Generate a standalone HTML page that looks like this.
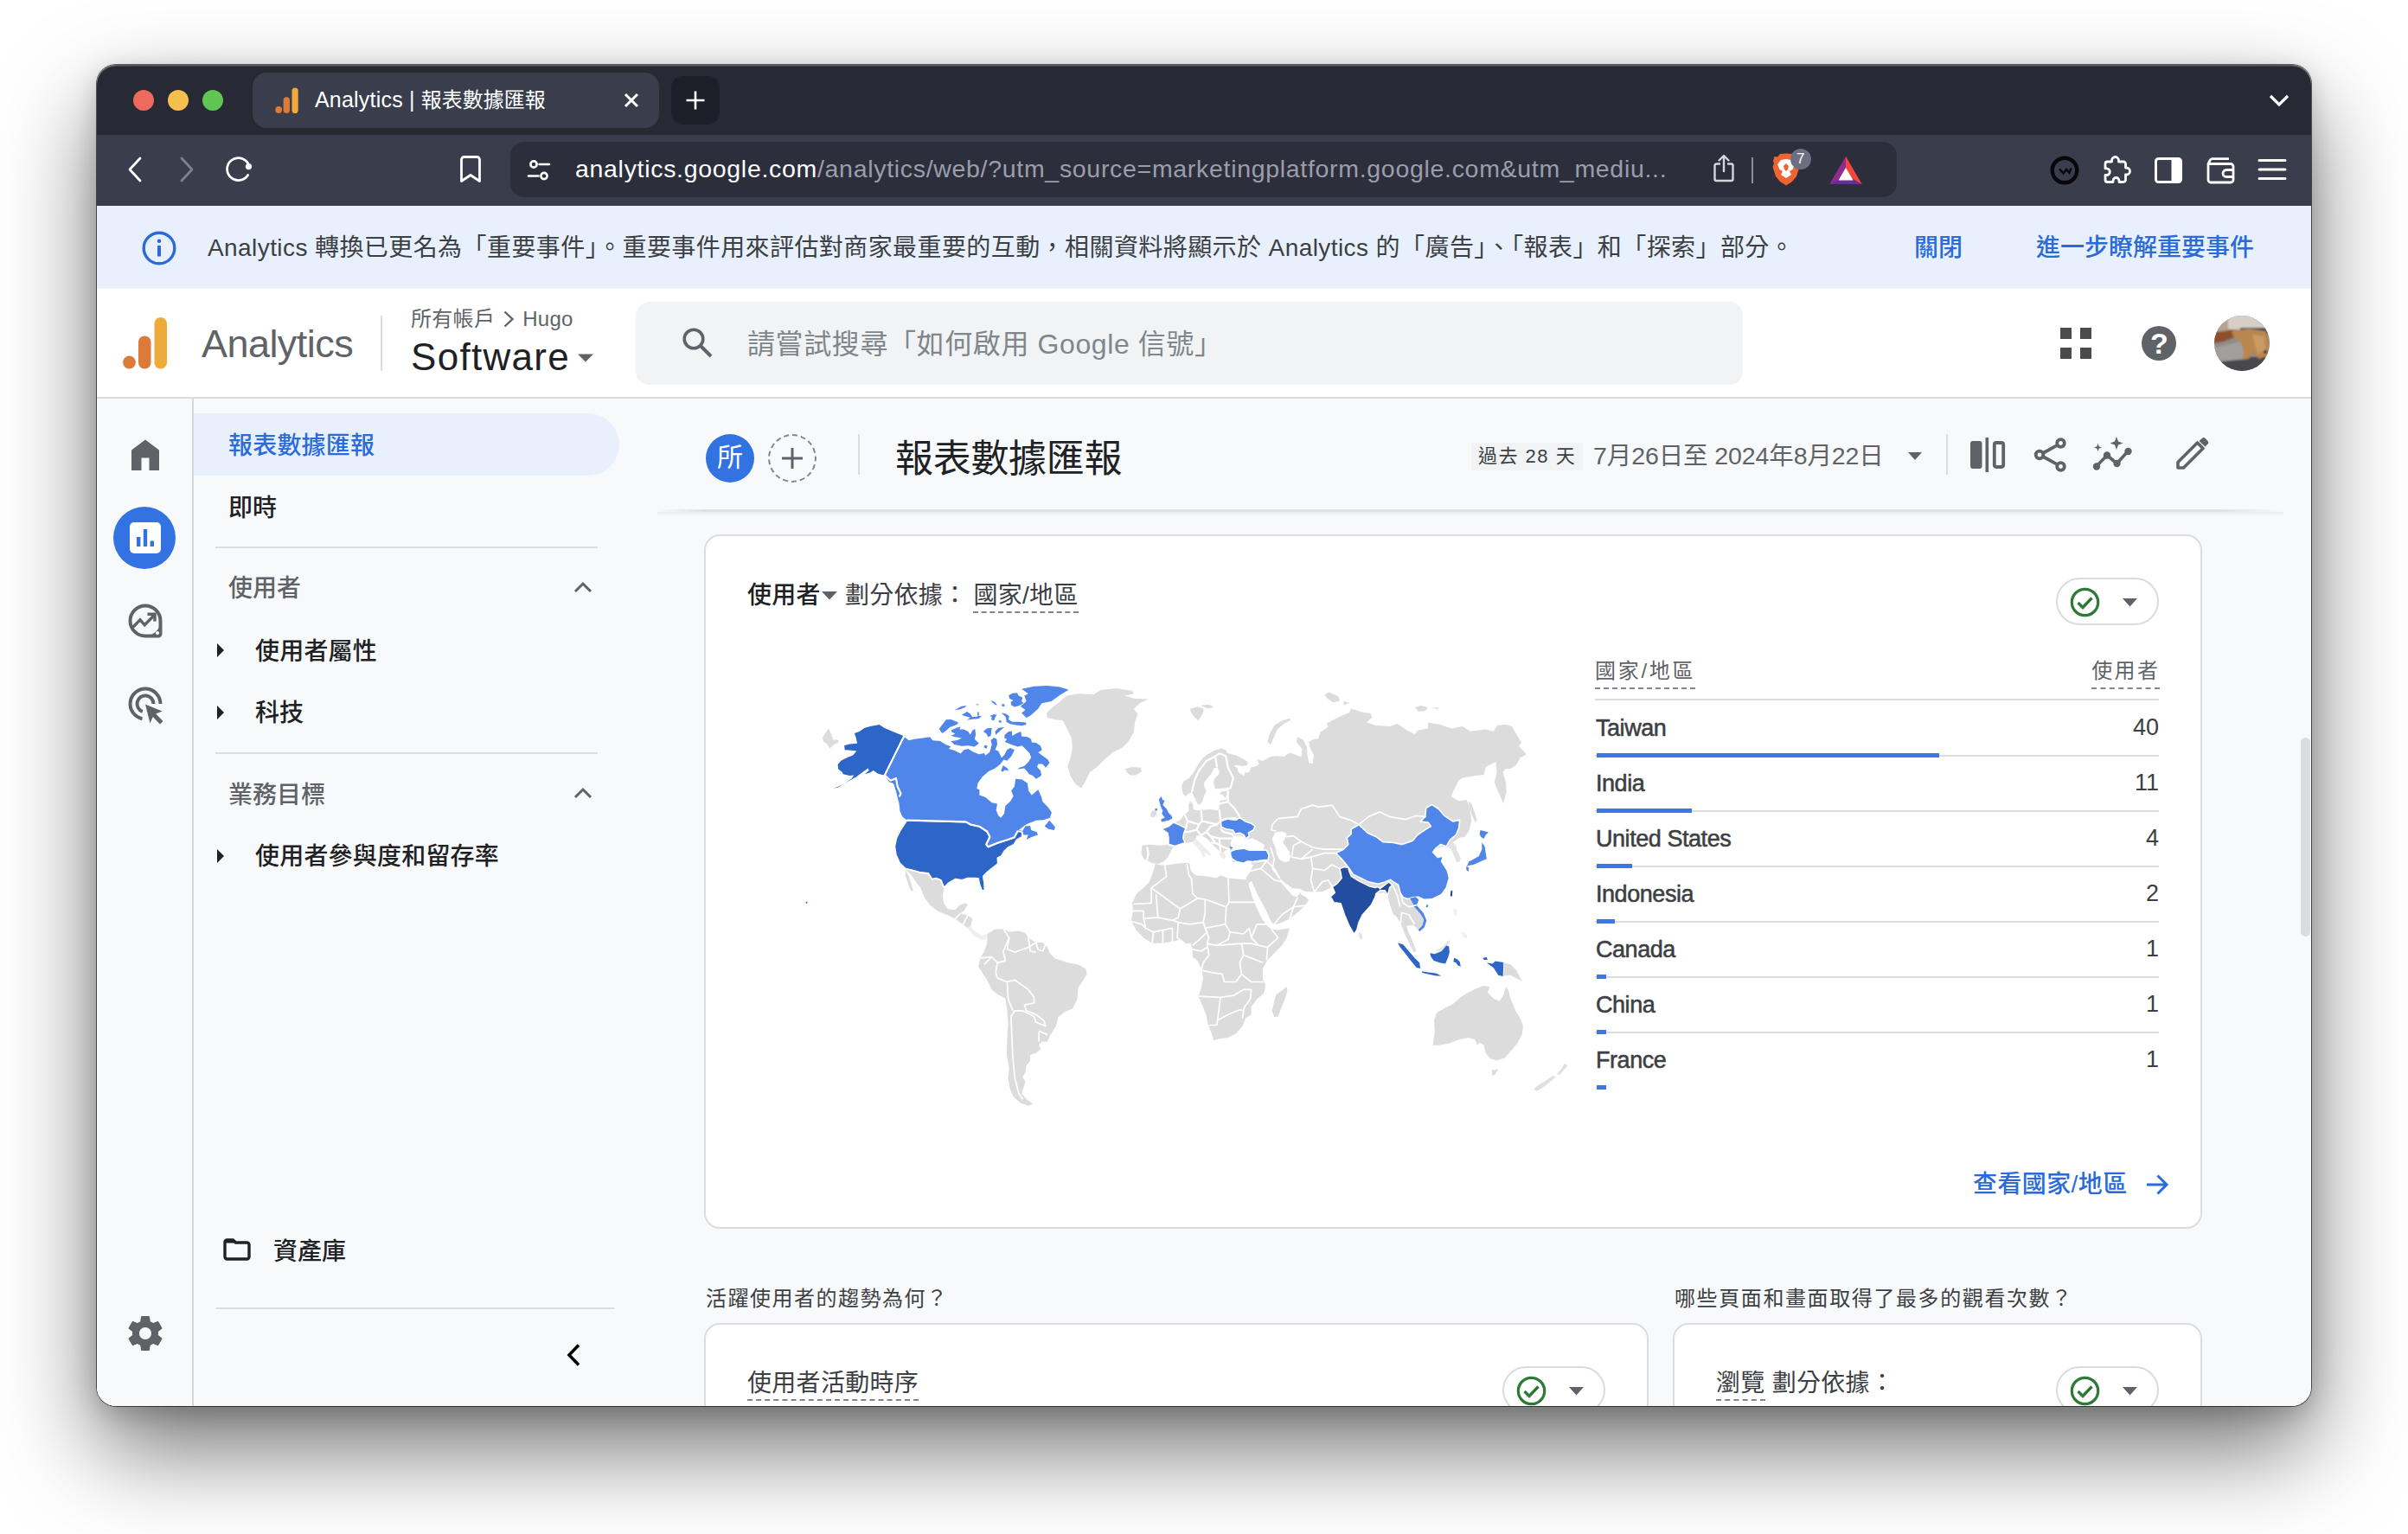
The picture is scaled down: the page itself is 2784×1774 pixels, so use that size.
<!DOCTYPE html>
<html lang="zh-Hant">
<head>
<meta charset="utf-8">
<title>Analytics | 報表數據匯報</title>
<style>
*{box-sizing:border-box;margin:0;padding:0}
html,body{width:2784px;height:1774px;background:#fff;overflow:hidden}
body{position:relative;font-family:"Liberation Sans","Noto Sans CJK TC",sans-serif;color:#202124}
.abs{position:absolute}
.t{position:absolute;white-space:nowrap;line-height:1}
#win{position:absolute;left:112px;top:75px;width:2560px;height:1551px;border-radius:22px;overflow:hidden;background:#f8f9fa}
#shadow{position:absolute;left:112px;top:75px;width:2560px;height:1551px;border-radius:22px;
 box-shadow:0 0 0 1px rgba(0,0,0,.6),0 50px 110px rgba(0,0,0,.55),0 8px 30px rgba(0,0,0,.18)}
/* coordinates inside #win are page coords minus (112,75); we use an inner wrapper shifted back */
#pg{position:absolute;left:-112px;top:-75px;width:2784px;height:1774px}
#tabbar{left:112px;top:75px;width:2560px;height:81px;background:#272935}
#toolbar{left:112px;top:156px;width:2560px;height:82px;background:#3a3d4b}
#banner{left:112px;top:238px;width:2560px;height:96px;background:#e8f0fd}
#hdr{left:112px;top:334px;width:2560px;height:127px;background:#fff;border-bottom:2px solid #dadce0}
#rail{left:112px;top:461px;width:112px;height:1165px;background:#f8f9fa;border-right:2px solid #d5d7da}
.cjk{font-family:"Liberation Sans","Noto Sans CJK TC",sans-serif}
.m{font-weight:500}
.card{position:absolute;background:#fff;border:2px solid #dadce0;border-radius:18px}
.dash{border-bottom:2px dashed #80868b}
.hr{position:absolute;height:2px;background:#dadce0}
.pill{position:absolute;width:119px;height:55px;border:2px solid #dadce0;border-radius:28px;background:#fff}
.row{position:absolute;left:1844px;width:652px;height:64px}
.row .n{position:absolute;left:1px;top:19px;font-size:27px;font-weight:400;-webkit-text-stroke:.55px #3c4043;letter-spacing:-.45px;color:#3c4043;white-space:nowrap;line-height:1}
.row .v{position:absolute;right:0;top:18px;font-size:27px;color:#3c4043;white-space:nowrap;line-height:1}
.row .ln{position:absolute;left:0;right:0;top:63px;height:2px;background:#dadce0}
.row .b{position:absolute;left:2px;top:61px;height:5px;background:#3b78e7}
</style>
</head>
<body>
<div id="shadow"></div>
<div id="win"><div id="pg">

<!-- ===== TAB BAR ===== -->
<div id="tabbar" class="abs"></div>
<div class="abs" style="left:154px;top:104px;width:24px;height:24px;border-radius:50%;background:#ed6a5e"></div>
<div class="abs" style="left:194px;top:104px;width:24px;height:24px;border-radius:50%;background:#f5bf4f"></div>
<div class="abs" style="left:234px;top:104px;width:24px;height:24px;border-radius:50%;background:#61c554"></div>
<div class="abs" style="left:292px;top:84px;width:470px;height:64px;border-radius:16px;background:#3a3d4b"></div>
<svg class="abs" style="left:318px;top:101px" width="28" height="31" viewBox="0 0 28 31">
 <rect x="19.5" y="0.5" width="7.2" height="29.5" rx="3.6" fill="#eeaa3b"/>
 <rect x="9.6" y="11.2" width="7.4" height="18.8" rx="3.7" fill="#dc7b38"/>
 <circle cx="4.2" cy="26" r="3.9" fill="#dc7b38"/>
</svg>
<div class="t" style="left:364px;top:103px;font-size:25px;color:#fff;letter-spacing:.2px" id="tabtitle">Analytics | <span style="font-size:24px;letter-spacing:0">報表數據匯報</span></div>
<svg class="abs" style="left:720px;top:106px" width="20" height="20" viewBox="0 0 20 20"><path d="M3 3L17 17M17 3L3 17" stroke="#fff" stroke-width="3" stroke-linecap="butt"/></svg>
<div class="abs" style="left:776px;top:88px;width:56px;height:56px;border-radius:14px;background:#1d1f29"></div>
<svg class="abs" style="left:792px;top:104px" width="24" height="24" viewBox="0 0 24 24"><path d="M12 1.5V22.5M1.5 12H22.5" stroke="#fff" stroke-width="2.6"/></svg>
<svg class="abs" style="left:2622px;top:108px" width="26" height="16" viewBox="0 0 26 16"><path d="M3 3L13 13L23 3" fill="none" stroke="#fff" stroke-width="3.2" stroke-linejoin="miter"/></svg>


<!-- ===== TOOLBAR ===== -->
<div id="toolbar" class="abs"></div>
<svg class="abs" style="left:146px;top:180px" width="20" height="32" viewBox="0 0 20 32"><path d="M16 3L4 16L16 29" fill="none" stroke="#fff" stroke-width="2.8" stroke-linecap="round" stroke-linejoin="round"/></svg>
<svg class="abs" style="left:206px;top:180px" width="20" height="32" viewBox="0 0 20 32"><path d="M4 3L16 16L4 29" fill="none" stroke="#7d8192" stroke-width="2.8" stroke-linecap="round" stroke-linejoin="round"/></svg>
<svg class="abs" style="left:258px;top:178px" width="36" height="36" viewBox="0 0 36 36"><path d="M28.6 24.5A13 13 0 1 1 28.9 11.2" fill="none" stroke="#fff" stroke-width="2.8" stroke-linecap="round"/><circle cx="29.5" cy="14.6" r="3.6" fill="#fff"/></svg>
<svg class="abs" style="left:530px;top:178px" width="28" height="36" viewBox="0 0 28 36"><path d="M3.5 6.5a3 3 0 0 1 3-3h15a3 3 0 0 1 3 3V31.5L14 24.5L3.5 31.5Z" fill="none" stroke="#fff" stroke-width="2.8" stroke-linejoin="round"/></svg>
<div class="abs" style="left:590px;top:164px;width:1603px;height:64px;border-radius:16px;background:#2c2e3b"></div>
<svg class="abs" style="left:608px;top:182px" width="30" height="30" viewBox="0 0 30 30"><g fill="none" stroke="#fff" stroke-width="2.6" stroke-linecap="round"><circle cx="9" cy="8" r="3.6"/><path d="M15.5 8H27"/><circle cx="21" cy="21.5" r="3.6"/><path d="M3 21.5H14.5"/></g></svg>
<div class="t" style="left:665px;top:181px;font-size:28.5px;color:#fff;letter-spacing:.69px" id="url"><span>analytics.google.com</span><span style="color:#9a9eac">/analytics/web/?utm_source=marketingplatform.google.com&amp;utm_mediu...</span></div>
<svg class="abs" style="left:1978px;top:177px" width="30" height="36" viewBox="0 0 30 36"><g fill="none" stroke="#d5d7de" stroke-width="2.4" stroke-linecap="round" stroke-linejoin="round"><path d="M10 12.5H6.5a2 2 0 0 0-2 2V30a2 2 0 0 0 2 2h17a2 2 0 0 0 2-2V14.5a2 2 0 0 0-2-2H20"/><path d="M15 21V3.5M9.5 8.5L15 3L20.5 8.5"/></g></svg>
<div class="abs" style="left:2025px;top:182px;width:2px;height:30px;background:#8d90a0"></div>
<!-- brave lion -->
<svg class="abs" style="left:2048px;top:176px" width="34" height="40" viewBox="0 0 34 40"><path d="M17 1.5L24 2L27 5.5L30.5 5L32 10L31 13L32.5 17L29 28L24 34L17 38.5L10 34L5 28L1.5 17L3 13L2 10L3.5 5L7 5.5L10 2Z" fill="#f0642f"/><path d="M17 8L23 9L27 14L24.5 20L21 22L23 26L17 30L11 26L13 22L9.5 20L7 14L11 9Z" fill="#fff"/><path d="M17 13L20 16L19 20L17 22L15 20L14 16Z" fill="#f0642f"/></svg>
<div class="abs" style="left:2070px;top:172px;width:24px;height:24px;border-radius:50%;background:#6b6f80"></div>
<div class="t" style="left:2077px;top:175px;font-size:17px;color:#fff">7</div>
<!-- BAT triangle -->
<svg class="abs" style="left:2114px;top:180px" width="40" height="34" viewBox="0 0 40 34"><path d="M20 1L38.5 33H1.5Z" fill="#a5306a"/><path d="M20 1L38.5 33H20Z" fill="#f0483a"/><path d="M1.5 33L20 1L20 33Z" fill="#8f2d8f"/><path d="M1.5 33H38.5L20 22Z" fill="#6a2c9c"/><path d="M20 14L28.5 28.5H11.5Z" fill="#fff"/></svg>
<!-- right icons -->
<svg class="abs" style="left:2369px;top:179px" width="36" height="36" viewBox="0 0 36 36"><circle cx="18" cy="18" r="14.3" fill="none" stroke="#08080a" stroke-width="4.4"/><path d="M12 16.500L16.500 21.500L20 17L23.500 21L25.500 15.500" fill="none" stroke="#08080a" stroke-width="2.4"/></svg>
<svg class="abs" style="left:2429px;top:179px" width="36" height="36" viewBox="0 0 36 36"><path d="M12.5 6.5a4 4 0 0 1 8 0V8H26a2.5 2.5 0 0 1 2.500 2.500V15h1a4 4 0 0 1 0 8h-1v6a2.500 2.500 0 0 1-2.500 2.500H21v-1.500a3.500 3.500 0 0 0-7 0V31.500H7.500A2.500 2.500 0 0 1 5 29V23.500h1.500a3.800 3.800 0 0 0 0-7.600H5V10.500A2.500 2.500 0 0 1 7.500 8h5Z" fill="none" stroke="#fff" stroke-width="2.8" stroke-linejoin="round"/></svg>
<svg class="abs" style="left:2490px;top:181px" width="34" height="32" viewBox="0 0 34 32"><rect x="2.5" y="2.500" width="29" height="27" rx="3" fill="none" stroke="#fff" stroke-width="3"/><path d="M20.500 2.500H29a2.500 2.500 0 0 1 2.500 2.500V27a2.500 2.500 0 0 1-2.500 2.500H20.500Z" fill="#fff"/></svg>
<svg class="abs" style="left:2550px;top:180px" width="36" height="34" viewBox="0 0 36 34"><g fill="none" stroke="#fff" stroke-width="2.8" stroke-linejoin="round"><path d="M3 9.500V28a3 3 0 0 0 3 3H29a3 3 0 0 0 3-3V12.500a3 3 0 0 0-3-3H3L5 5.500a3 3 0 0 1 2.700-1.800H27"/><path d="M32 16.500H24a4 4 0 0 0 0 8h8"/></g></svg>
<svg class="abs" style="left:2610px;top:182px" width="34" height="30" viewBox="0 0 34 30"><path d="M2 3.500H32M2 14H32M2 24.500H32" stroke="#fff" stroke-width="3" stroke-linecap="round"/></svg>


<!-- ===== BANNER ===== -->
<div id="banner" class="abs"></div>
<svg class="abs" style="left:163px;top:266px" width="42" height="42" viewBox="0 0 42 42"><circle cx="21" cy="21" r="17.8" fill="none" stroke="#2a6bd9" stroke-width="3.4"/><circle cx="21" cy="12.800" r="2.300" fill="#2a6bd9"/><rect x="19" y="18" width="4" height="12.500" fill="#2a6bd9"/></svg>
<div class="t" style="left:240px;top:273px;font-size:28px;color:#3c4043;letter-spacing:.42px" id="bannertxt">Analytics 轉換已更名為「重要事件」。重要事件用來評估對商家最重要的互動，相關資料將顯示於 Analytics 的「廣告」、「報表」和「探索」部分。</div>
<div class="t m" style="left:2213px;top:273px;font-size:28px;color:#2a6bd9" id="bclose">關閉</div>
<div class="t m" style="left:2354px;top:273px;font-size:28px;color:#2a6bd9" id="bmore">進一步瞭解重要事件</div>


<!-- ===== HEADER ===== -->
<div id="hdr" class="abs"></div>
<svg class="abs" style="left:141px;top:366px" width="54" height="62" viewBox="0 0 54 62">
 <rect x="37.500" y="1" width="14.500" height="59.500" rx="7.200" fill="#eeaa3b"/>
 <rect x="19" y="22.500" width="14.500" height="38" rx="7.200" fill="#dc7b38"/>
 <circle cx="8.500" cy="53" r="7.400" fill="#dc7b38"/>
</svg>
<div class="t" style="left:233px;top:375px;font-size:45px;color:#5f6368;letter-spacing:-.55px" id="galogo">Analytics</div>
<div class="abs" style="left:440px;top:365px;width:2px;height:64px;background:#dadce0"></div>
<div class="t" style="left:475px;top:357px;font-size:24px;color:#5f6368;letter-spacing:.3px" id="crumb">所有帳戶 <svg width="14" height="22" viewBox="0 0 14 22" style="vertical-align:-3px;margin:0 2px"><path d="M2.500 2.500L11.500 11L2.500 19.500" fill="none" stroke="#5f6368" stroke-width="2.400"/></svg> Hugo</div>
<div class="t" style="left:475px;top:391px;font-size:44px;color:#202124;letter-spacing:1.3px" id="prop">Software</div>
<svg class="abs" style="left:667px;top:408px" width="20" height="12" viewBox="0 0 20 12"><path d="M1 1.500H19L10 10.500Z" fill="#5f6368"/></svg>
<div class="abs" style="left:735px;top:349px;width:1280px;height:96px;border-radius:16px;background:#f1f3f4"></div>
<svg class="abs" style="left:786px;top:376px" width="40" height="40" viewBox="0 0 40 40"><circle cx="16" cy="16" r="10.800" fill="none" stroke="#5f6368" stroke-width="3.600"/><path d="M24 24L36 36" stroke="#5f6368" stroke-width="4"/></svg>
<div class="t" style="left:864px;top:381.5px;font-size:32px;color:#80868b;letter-spacing:.6px" id="search">請嘗試搜尋「如何啟用 Google 信號」</div>
<svg class="abs" style="left:2381px;top:378px" width="38" height="38" viewBox="0 0 38 38"><g fill="#4b4b4b"><rect x="1" y="1" width="13" height="13"/><rect x="24" y="1" width="13" height="13"/><rect x="1" y="24" width="13" height="13"/><rect x="24" y="24" width="13" height="13"/></g></svg>
<div class="abs" style="left:2476px;top:377px;width:40px;height:40px;border-radius:50%;background:#5f6368"></div>
<div class="t" style="left:2486px;top:380px;font-size:34px;font-weight:700;color:#fff">?</div>
<svg class="abs" style="left:2560px;top:365px" width="64" height="64" viewBox="0 0 64 64"><defs><clipPath id="avc"><circle cx="32" cy="32" r="32"/></clipPath><filter id="avb" x="-20%" y="-20%" width="140%" height="140%"><feGaussianBlur stdDeviation="1.3"/></filter></defs><g clip-path="url(#avc)"><rect width="64" height="64" fill="#8f8b8b"/><g filter="url(#avb)"><rect x="-4" y="-4" width="72" height="20" fill="#d6cfc5"/><rect x="-4" y="-4" width="20" height="22" fill="#b3a394"/><rect x="30" y="14" width="38" height="8" fill="#3f4755"/><rect x="-4" y="48" width="72" height="20" fill="#4a474c"/><path d="M-4 38L30 30L40 50L-4 54Z" fill="#a29e9d"/><path d="M-2 20L22 16L26 24L10 30L-2 32Z" fill="#8e4f2c"/><path d="M20 18L40 15L60 18L64 30L62 46L52 50L44 42L40 50L33 50L34 40L30 30L22 24Z" fill="#b9864f"/><path d="M44 22L58 24L60 40L50 44Z" fill="#c99a62"/><circle cx="59" cy="42" r="2" fill="#2a1c14"/></g></g></svg>


<!-- ===== LEFT RAIL + NAV ===== -->
<div id="rail" class="abs"></div>
<!-- rail icons -->
<svg class="abs" style="left:151px;top:507px" width="34" height="38" viewBox="0 0 34 38"><path d="M17 1.500L33 13.500V37H21.500V22.500H12.500V37H1V13.500Z" fill="#5f6368"/></svg>
<div class="abs" style="left:131px;top:586px;width:72px;height:72px;border-radius:50%;background:#3372e1"></div>
<svg class="abs" style="left:150px;top:604px" width="36" height="36" viewBox="0 0 36 36"><rect x="0" y="0" width="36" height="36" rx="5" fill="#fff"/><rect x="8" y="17" width="4.400" height="11" fill="#3372e1"/><rect x="15.800" y="8" width="4.400" height="20" fill="#3372e1"/><rect x="23.600" y="21.500" width="4.400" height="6.500" fill="#3372e1"/></svg>
<svg class="abs" style="left:148px;top:697.500px" width="40" height="40" viewBox="0 0 40 40"><path d="M20 37.500H37.500V20A17.500 17.500 0 0 1 20 37.500Z" fill="#5f6368"/><path d="M37.500 20A17.500 17.500 0 1 0 20 37.500H35a2.500 2.500 0 0 0 2.500-2.500Z" fill="none" stroke="#5f6368" stroke-width="4"/><circle cx="34" cy="34" r="2.100" fill="#fff"/><path d="M5.500 27.500L14 18.800L19.200 24.800L29.500 14.200" fill="none" stroke="#5f6368" stroke-width="3.400"/><path d="M22.500 12.200H31V20.500" fill="none" stroke="#5f6368" stroke-width="3.400"/></svg>
<svg class="abs" style="left:147px;top:792.500px" width="44" height="46" viewBox="0 0 44 46"><g fill="none" stroke="#5f6368" stroke-width="4"><path d="M17.500 38.200A17.500 17.500 0 1 1 38.500 21"/><path d="M17.800 29.900A9.500 9.500 0 1 1 30.500 21"/></g><path d="M21 21.500L40.500 29.500L33.200 32.500L41.500 41L38 44.500L29.700 36L26.500 43.500Z" fill="#5f6368"/></svg>
<svg class="abs" style="left:144px;top:1517.500px" width="48" height="48" viewBox="0 0 24 24"><path fill="#5f6368" d="M19.430 12.980c.040-.320.070-.640.070-.980s-.030-.660-.070-.980l2.110-1.650c.190-.150.240-.420.120-.640l-2-3.460c-.120-.220-.390-.300-.610-.220l-2.490 1c-.520-.400-1.080-.730-1.690-.980l-.380-2.650C14.460 2.180 14.250 2 14 2h-4c-.250 0-.460.180-.490.420l-.380 2.650c-.610.250-1.170.590-1.690.980l-2.490-1c-.230-.090-.490 0-.610.220l-2 3.460c-.130.220-.070.490.120.640l2.110 1.650c-.040.320-.070.650-.070.980s.030.660.070.980l-2.110 1.650c-.190.150-.240.420-.120.640l2 3.460c.120.220.390.300.610.220l2.490-1c.520.400 1.080.730 1.690.980l.380 2.650c.030.240.240.420.490.420h4c.250 0 .460-.180.490-.420l.380-2.650c.610-.250 1.170-.590 1.690-.980l2.490 1c.230.090.490 0 .610-.220l2-3.460c.120-.220.070-.490-.120-.640l-2.110-1.650zM12 15.500c-1.930 0-3.500-1.570-3.500-3.500s1.570-3.500 3.500-3.500 3.500 1.570 3.500 3.500-1.570 3.500-3.500 3.500z"/></svg>
<!-- nav list -->
<div class="abs" style="left:224px;top:478px;width:492px;height:72px;border-radius:0 36px 36px 0;background:#e8f0fd"></div>
<div class="t m" style="left:264px;top:501.5px;font-size:28px;color:#2a6bd9;letter-spacing:.2px">報表數據匯報</div>
<div class="t m" style="left:264px;top:573.5px;font-size:28px;color:#202124">即時</div>
<div class="hr" style="left:249px;top:632px;width:442px"></div>
<div class="t m" style="left:264px;top:666.5px;font-size:28px;color:#5f6368">使用者</div>
<svg class="abs" style="left:663px;top:672px" width="22" height="14" viewBox="0 0 22 14"><path d="M2 12L11 3L20 12" fill="none" stroke="#5f6368" stroke-width="3"/></svg>
<svg class="abs" style="left:251px;top:744px" width="8" height="16" viewBox="0 0 8 16"><path d="M0 0L8 8L0 16Z" fill="#202124"/></svg>
<div class="t m" style="left:295px;top:739.5px;font-size:28px;color:#202124;letter-spacing:.2px">使用者屬性</div>
<svg class="abs" style="left:251px;top:816px" width="8" height="16" viewBox="0 0 8 16"><path d="M0 0L8 8L0 16Z" fill="#202124"/></svg>
<div class="t m" style="left:295px;top:810.5px;font-size:28px;color:#202124">科技</div>
<div class="hr" style="left:249px;top:870px;width:442px"></div>
<div class="t m" style="left:264px;top:905.5px;font-size:28px;color:#5f6368">業務目標</div>
<svg class="abs" style="left:663px;top:910px" width="22" height="14" viewBox="0 0 22 14"><path d="M2 12L11 3L20 12" fill="none" stroke="#5f6368" stroke-width="3"/></svg>
<svg class="abs" style="left:251px;top:982px" width="8" height="16" viewBox="0 0 8 16"><path d="M0 0L8 8L0 16Z" fill="#202124"/></svg>
<div class="t m" style="left:295px;top:976.5px;font-size:28px;color:#202124;letter-spacing:.2px">使用者參與度和留存率</div>
<svg class="abs" style="left:258px;top:1432px" width="32" height="26" viewBox="0 0 32 26"><path d="M2 4.500a2.500 2.500 0 0 1 2.500-2.500H11.500L14.500 5H27.500A2.500 2.500 0 0 1 30 7.500V21.500A2.500 2.500 0 0 1 27.500 24H4.500A2.500 2.500 0 0 1 2 21.500Z" fill="none" stroke="#202124" stroke-width="3.400" stroke-linejoin="round"/><path d="M2 2H12L14.500 5.500H2Z" fill="#202124"/></svg>
<div class="t m" style="left:316px;top:1433.5px;font-size:28px;color:#202124">資產庫</div>
<div class="hr" style="left:250px;top:1512px;width:460px"></div>
<svg class="abs" style="left:654px;top:1553px" width="18" height="28" viewBox="0 0 18 28"><path d="M15 2.500L4 14L15 25.500" fill="none" stroke="#000" stroke-width="3.600"/></svg>


<!-- ===== MAIN ===== -->
<!-- title row -->
<div class="abs" style="left:816px;top:502px;width:56px;height:56px;border-radius:50%;background:#3372e1"></div>
<div class="t" style="left:829px;top:514px;font-size:30px;color:#fff">所</div>
<div class="abs" style="left:888px;top:502px;width:56px;height:56px;border-radius:50%;border:2px dashed #80868b"></div>
<svg class="abs" style="left:903px;top:517px" width="26" height="26" viewBox="0 0 26 26"><path d="M13 1V25M1 13H25" stroke="#5f6368" stroke-width="3"/></svg>
<div class="abs" style="left:992px;top:502px;width:2px;height:47px;background:#dadce0"></div>
<div class="t" style="left:1035px;top:509px;font-size:44px;color:#202124;letter-spacing:-.3px" id="ttl">報表數據匯報</div>
<div class="abs" style="left:1701px;top:512px;width:129px;height:32px;background:#f1f3f4"></div>
<div class="t" style="left:1709px;top:517px;font-size:22px;color:#3c4043;letter-spacing:1.5px" id="chip">過去 28 天</div>
<div class="t" style="left:1842px;top:513px;font-size:28.500px;color:#5f6368;letter-spacing:-.1px" id="daterange">7月26日至 2024年8月22日</div>
<svg class="abs" style="left:2206px;top:523px" width="16" height="10" viewBox="0 0 16 10"><path d="M0 0H16L8 9Z" fill="#5f6368"/></svg>
<div class="abs" style="left:2250px;top:502px;width:2px;height:47px;background:#dadce0"></div>
<!-- compare -->
<svg class="abs" style="left:2277px;top:506px" width="42" height="40" viewBox="0 0 42 40"><rect x="1" y="4" width="13.500" height="32" rx="3" fill="#5f6368"/><rect x="18.500" y="0" width="3.600" height="40" fill="#5f6368"/><rect x="28.800" y="6" width="10.400" height="28" rx="2.200" fill="none" stroke="#5f6368" stroke-width="3.800"/></svg>
<!-- share -->
<svg class="abs" style="left:2351px;top:506px" width="40" height="40" viewBox="0 0 40 40"><g fill="none" stroke="#5f6368" stroke-width="3.800"><circle cx="31.500" cy="6.500" r="4.300"/><circle cx="31.500" cy="33.500" r="4.300"/><circle cx="7" cy="20" r="4.300"/><path d="M27.500 8.800L11 18M11 22L27.500 31.200"/></g></svg>
<!-- insights -->
<svg class="abs" style="left:2418px;top:505px" width="48" height="42" viewBox="0 0 48 42"><g fill="none" stroke="#5f6368" stroke-width="3.600" stroke-linejoin="round"><path d="M6 34L18 21.500L29.500 31L42 17"/></g><circle cx="6" cy="34.500" r="4.200" fill="#5f6368"/><circle cx="18" cy="21.500" r="4.200" fill="#5f6368"/><circle cx="29.500" cy="31" r="4.200" fill="#5f6368"/><circle cx="42.500" cy="17" r="4.200" fill="#5f6368"/><path d="M29 0L31 5.500L36.500 7.500L31 9.500L29 15L27 9.500L21.500 7.500L27 5.500Z" fill="#5f6368"/><path d="M7.500 8L8.700 11.300L12 12.500L8.700 13.700L7.500 17L6.300 13.700L3 12.500L6.300 11.300Z" fill="#5f6368"/></svg>
<!-- pencil -->
<svg class="abs" style="left:2513px;top:505px" width="42" height="42" viewBox="0 0 42 42"><path d="M5 29.500L27.500 7L34 13.500L11.500 36H5Z" fill="none" stroke="#5f6368" stroke-width="3.600" stroke-linejoin="round"/><path d="M29.500 5L33 1.800a2.500 2.500 0 0 1 3.500 0L39.500 5a2.500 2.500 0 0 1 0 3.500L36.500 11.500Z" fill="#5f6368"/></svg>
<!-- sticky header shadow -->
<div class="abs" style="left:760px;top:589px;width:1880px;height:3px;background:linear-gradient(90deg,rgba(0,0,0,0) 0,rgba(0,0,0,.11) 3%,rgba(0,0,0,.11) 96%,rgba(0,0,0,0) 100%);opacity:.9"></div>
<div class="abs" style="left:760px;top:592px;width:1880px;height:5px;background:linear-gradient(180deg,rgba(0,0,0,.06),rgba(0,0,0,0))"></div>

<!-- card 1 -->
<div class="card" style="left:814px;top:618px;width:1732px;height:803px"></div>
<div class="t" style="left:864px;top:675px;font-size:28px;color:#202124;letter-spacing:.3px" id="c1t"><span class="m">使用者</span><svg width="18" height="10" viewBox="0 0 18 10" style="vertical-align:4px;margin:0 9px 0 1px"><path d="M0 0H18L9 9.500Z" fill="#5f6368"/></svg><span style="color:#3c4043">劃分依據：</span><span class="dash" style="margin-left:7px;padding-bottom:3px;color:#3c4043">國家/地區</span></div>
<div class="pill" style="left:2377px;top:668px"></div>
<svg class="abs" style="left:2393px;top:679px" width="35" height="35" viewBox="0 0 35 35"><circle cx="17.500" cy="17.500" r="15.200" fill="none" stroke="#2c7a36" stroke-width="3.200"/><path d="M9.500 18L15 23.500L25.500 12.500" fill="none" stroke="#2c7a36" stroke-width="3.400"/></svg>
<svg class="abs" style="left:2454px;top:692px" width="17" height="10" viewBox="0 0 17 10"><path d="M0 0H17L8.500 9.500Z" fill="#5f6368"/></svg>

<svg class="abs" style="left:0;top:0" width="2784" height="1774" viewBox="0 0 2784 1774"><g stroke-linejoin="round">
<path d="M1209.9 824.4L1215.5 818.9L1224.4 812.2L1233.3 804.4L1246.6 802.2L1264.4 803.3L1273.3 797.8L1291.0 796.0L1308.8 798.9L1311.0 802.2L1299.9 804.4L1311.0 807.8L1327.7 808.4L1317.7 813.3L1311.0 820.0L1315.5 825.5L1312.1 835.5L1311.0 846.6L1304.4 857.8L1297.7 864.4L1286.6 870.0L1277.7 877.8L1268.8 886.6L1259.9 893.3L1253.3 906.6L1249.9 911.5L1243.3 906.6L1237.7 897.7L1234.4 886.6L1237.7 875.5L1239.9 864.4L1238.8 853.3L1233.3 842.2L1228.8 833.3L1219.9 832.2L1211.0 830.0Z" fill="#dcdcdc"/>
<path d="M1301.0 888.9L1308.8 887.1L1318.8 887.8L1319.9 892.2L1313.2 896.6L1306.6 896.6L1302.6 892.9Z" fill="#dcdcdc"/>
<path d="M950.7 853.3L957.8 842.6L961.1 848.9L963.3 855.5L968.9 855.5L969.3 858.9L964.4 861.1L959.5 865.5L955.5 860.0L952.2 857.8Z" fill="#dcdcdc"/>
<path d="M1046.6 1005.5L1055.5 1007.1L1063.3 1009.3L1073.3 1010.6L1077.7 1017.3L1082.2 1015.9L1087.7 1018.2L1091.5 1027.1L1090.0 1035.5L1091.1 1044.4L1095.5 1051.1L1104.4 1052.2L1110.0 1046.6L1116.6 1044.4L1118.8 1046.6L1114.4 1053.3L1110.0 1056.6L1118.8 1058.8L1124.4 1062.2L1122.2 1071.0L1118.8 1073.3L1113.3 1069.3L1104.4 1062.6L1095.5 1058.2L1084.4 1053.7L1075.5 1047.1L1068.9 1038.2L1064.4 1027.1L1057.7 1018.2L1053.3 1011.5Z" fill="#dcdcdc"/>
<path d="M1046.6 1005.5L1050.6 1013.3L1053.7 1022.2L1056.0 1030.2L1053.3 1030.2L1050.0 1022.2L1047.1 1013.3Z" fill="#dcdcdc"/>
<path d="M1122.2 1071.0L1126.6 1076.6L1135.5 1082.2L1141.1 1079.9L1144.4 1077.7L1144.4 1084.4L1135.5 1087.0L1126.6 1082.6L1118.8 1073.3Z" fill="#efefef"/>
<path d="M1331.0 938.9L1335.5 936.6L1337.7 941.1L1334.4 945.5L1329.9 944.4Z" fill="#dcdcdc"/>
<path d="M1375.5 820.0L1384.4 817.3L1391.5 819.5L1390.7 824.9L1385.5 833.3L1381.1 829.3L1377.8 824.9Z" fill="#dcdcdc"/>
<path d="M1387.8 816.0L1397.3 814.7L1403.3 817.3L1397.3 819.5Z" fill="#dcdcdc"/>
<path d="M1465.5 857.8L1467.8 848.9L1473.3 838.9L1482.2 833.3L1491.1 830.7L1492.4 832.4L1484.4 836.9L1476.9 843.5L1472.4 853.3L1468.9 861.3Z" fill="#dcdcdc"/>
<path d="M1531.5 803.3L1536.6 800.4L1547.7 805.5L1548.8 810.7L1541.1 812.2L1534.4 807.8Z" fill="#dcdcdc"/>
<path d="M1553.3 810.7L1560.4 812.9L1553.7 815.5Z" fill="#dcdcdc"/>
<path d="M1635.9 818.2L1642.6 816.0L1651.0 818.2L1647.7 822.2L1639.9 822.7Z" fill="#dcdcdc"/>
<path d="M1655.5 818.2L1663.3 818.2L1662.2 820.2Z" fill="#dcdcdc"/>
<path d="M1697.7 927.1L1701.0 928.9L1704.4 937.7L1707.7 948.8L1705.5 951.1L1701.7 942.2L1698.8 933.3Z" fill="#dcdcdc"/>
<path d="M1320.7 977.7L1330.0 976.8L1342.5 977.7L1350.6 976.5L1351.2 969.6L1348.7 962.7L1343.1 959.0L1351.2 956.5L1358.7 950.9L1364.3 948.4L1368.6 942.8L1372.4 939.7L1374.6 937.2L1373.9 931.0L1376.1 926.6L1379.2 929.7L1379.8 936.2L1384.8 937.2L1389.8 936.6L1399.8 936.0L1407.2 937.2L1409.7 934.7L1409.7 929.7L1411.0 924.8L1416.0 923.5L1414.7 919.8L1409.7 917.9L1412.2 915.4L1419.7 914.8L1422.2 912.3L1419.7 910.4L1414.7 911.7L1404.8 912.3L1402.9 904.8L1404.8 899.8L1409.7 894.9L1409.7 891.1L1407.2 887.4L1403.5 888.6L1401.6 893.0L1397.3 898.6L1392.3 904.8L1392.3 909.8L1394.8 914.8L1392.3 919.8L1391.0 923.5L1389.8 927.9L1385.4 931.0L1382.3 924.8L1379.8 919.8L1378.0 916.0L1374.2 917.9L1369.9 921.0L1367.4 917.3L1366.1 908.6L1368.6 903.6L1374.9 899.8L1379.8 893.6L1384.8 884.9L1389.8 877.4L1396.0 872.4L1404.8 867.4L1412.2 865.6L1417.2 867.4L1418.7 870.9L1422.2 871.8L1429.7 873.7L1437.1 877.4L1442.7 881.1L1442.1 884.9L1437.1 886.1L1429.7 884.9L1426.2 885.6L1430.9 888.6L1431.5 893.0L1438.4 897.3L1439.1 893.6L1444.6 893.0L1445.9 887.4L1452.7 886.1L1455.8 883.6L1453.3 878.0L1459.6 879.9L1462.1 878.7L1469.5 874.9L1474.5 874.3L1484.5 874.9L1487.6 872.4L1492.0 870.6L1504.4 875.5L1505.5 866.6L1498.9 857.8L1500.0 852.2L1506.6 855.5L1511.1 864.4L1511.5 873.3L1513.3 882.2L1517.7 883.3L1518.9 873.3L1514.4 864.4L1513.3 857.8L1517.7 855.5L1524.4 853.8L1526.2 847.1L1535.5 840.4L1533.7 836.7L1544.4 831.1L1553.3 826.7L1560.0 824.0L1562.2 819.5L1573.3 823.3L1584.4 824.9L1586.6 829.3L1580.0 835.5L1591.1 839.1L1606.6 840.0L1615.5 836.9L1626.6 844.4L1635.5 848.9L1639.9 844.4L1651.0 842.2L1651.0 835.5L1664.4 837.8L1677.7 842.6L1691.0 840.0L1699.9 845.8L1717.7 843.5L1726.6 845.8L1731.0 839.1L1739.9 837.8L1747.9 840.0L1753.2 848.9L1759.0 859.1L1755.9 862.6L1764.8 872.4L1757.7 876.0L1753.2 884.4L1746.6 888.9L1739.9 889.3L1737.7 893.3L1741.0 904.4L1741.7 915.5L1738.1 929.3L1732.1 915.5L1727.7 904.4L1730.6 893.3L1729.3 881.1L1717.7 887.1L1715.5 896.0L1704.4 897.3L1691.0 899.5L1686.6 902.6L1679.9 915.5L1677.7 921.3L1686.6 926.2L1695.5 924.9L1699.5 935.5L1701.3 948.8L1698.6 960.4L1693.3 968.0L1687.0 968.8L1680.4 973.7L1673.3 980.0L1666.6 978.8L1659.9 982.2L1656.6 985.5L1662.2 991.1L1668.8 990.0L1666.6 995.5L1673.3 1006.6L1675.5 1015.5L1672.2 1026.6L1666.6 1034.4L1655.5 1039.9L1646.6 1040.4L1639.9 1037.7L1635.5 1038.8L1637.7 1046.6L1645.5 1055.5L1649.3 1064.8L1646.6 1072.2L1641.0 1077.3L1634.2 1069.7L1626.2 1070.8L1627.9 1077.0L1633.1 1088.4L1637.3 1099.5L1634.8 1101.5L1629.3 1090.8L1623.7 1079.5L1619.3 1067.0L1614.2 1059.7L1610.6 1057.3L1606.8 1045.9L1604.4 1035.9L1599.9 1032.2L1593.3 1033.3L1589.9 1036.6L1585.5 1046.6L1575.5 1057.7L1571.1 1066.6L1568.8 1075.5L1565.5 1079.9L1560.0 1071.0L1554.4 1057.7L1550.0 1044.4L1542.2 1043.3L1538.8 1036.6L1543.3 1032.2L1540.0 1025.5L1529.5 1031.1L1519.5 1031.5L1509.5 1031.1L1503.3 1027.9L1494.6 1027.3L1487.1 1022.2L1479.7 1015.9L1479.7 1019.3L1486.0 1025.9L1489.7 1030.4L1494.6 1035.9L1499.7 1037.3L1503.3 1031.7L1504.6 1034.8L1509.5 1037.3L1512.9 1041.1L1508.9 1047.1L1500.0 1055.5L1491.1 1062.6L1480.0 1067.7L1472.6 1069.3L1468.9 1064.4L1465.5 1056.6L1460.4 1046.6L1454.4 1035.5L1450.0 1025.5L1447.1 1018.8L1444.0 1021.1L1440.4 1015.5L1446.2 1007.1L1448.9 1000.0L1446.5 999.5L1447.1 996.4L1435.9 998.3L1424.7 996.4L1422.2 987.7L1421.9 982.1L1417.2 982.7L1414.7 985.8L1411.0 985.2L1407.2 982.1L1403.5 978.3L1399.8 974.6L1394.8 969.6L1388.6 965.9L1383.6 966.5L1382.3 969.6L1379.8 973.3L1373.6 974.6L1369.9 975.2L1363.6 975.8L1358.0 978.9L1354.9 982.1L1352.4 987.0L1349.9 992.0L1345.0 996.4L1338.7 998.9L1332.5 998.3L1327.5 995.8L1322.5 993.3L1319.4 987.0L1320.0 980.8Z" fill="#dcdcdc"/>
<path d="M1382.3 969.6L1388.6 975.8L1394.8 982.1L1399.8 987.0L1399.1 989.5L1394.8 987.0L1392.3 985.8L1393.5 990.8L1391.0 992.0L1388.6 985.8L1383.6 979.6L1378.6 974.6Z" fill="#eeeeee"/>
<path d="M1411.0 985.2L1414.7 985.8L1417.2 989.5L1416.0 993.3L1412.2 992.0L1409.7 988.3Z" fill="#ececec"/>
<path d="M1678.8 974.4L1683.3 976.6L1684.4 983.3L1688.8 992.2L1687.7 996.6L1683.9 997.3L1681.0 990.0L1677.7 982.2L1674.4 980.0Z" fill="#e3e3e3"/>
<path d="M1571.1 1077.8L1574.4 1080.0L1575.5 1085.5L1572.9 1086.2L1570.6 1082.2Z" fill="#e6e6e6"/>
<path d="M1335.5 998.9L1346.6 1001.1L1357.7 998.9L1372.2 997.8L1375.5 998.9L1376.6 1006.7L1382.2 1012.2L1393.3 1013.3L1406.6 1015.5L1411.0 1012.2L1419.9 1015.5L1433.3 1016.7L1443.3 1017.3L1443.9 1024.4L1447.9 1037.8L1453.3 1051.1L1458.8 1062.2L1465.5 1071.1L1469.9 1074.4L1477.7 1075.5L1491.0 1073.3L1487.7 1084.4L1482.1 1093.3L1473.3 1102.2L1465.5 1110.0L1459.9 1120.0L1459.9 1131.1L1463.3 1140.0L1461.0 1148.9L1453.3 1155.5L1446.6 1164.4L1446.6 1173.3L1439.9 1177.7L1436.6 1186.6L1428.8 1195.5L1419.9 1200.0L1411.0 1201.1L1403.3 1203.3L1401.0 1195.5L1396.6 1184.4L1394.4 1173.3L1389.9 1162.2L1385.5 1152.2L1388.8 1142.2L1391.1 1131.1L1388.8 1120.0L1384.4 1111.1L1378.8 1106.6L1378.8 1097.8L1376.6 1091.1L1369.9 1091.1L1364.4 1086.6L1355.5 1088.9L1344.4 1090.6L1332.2 1091.1L1322.2 1084.4L1314.4 1076.6L1307.7 1065.5L1310.0 1053.3L1308.8 1044.4L1314.4 1033.3L1322.2 1026.7L1328.8 1020.0L1332.2 1011.1L1334.4 1004.4Z" fill="#dcdcdc"/>
<path d="M1487.7 1141.1L1488.4 1145.5L1485.5 1155.5L1481.0 1166.6L1477.7 1175.5L1473.3 1176.0L1470.6 1168.8L1473.3 1157.7L1475.5 1150.0L1482.1 1145.5Z" fill="#dcdcdc"/>
<path d="M1142.2 1080.0L1150.0 1074.4L1160.0 1074.4L1166.7 1077.8L1177.8 1076.6L1185.5 1078.9L1188.9 1084.4L1197.8 1090.0L1205.5 1090.0L1211.1 1095.5L1214.4 1103.3L1220.0 1108.4L1233.3 1112.9L1246.6 1115.5L1255.5 1120.4L1256.6 1126.6L1251.1 1135.5L1246.6 1142.2L1245.5 1155.5L1240.0 1166.6L1231.1 1170.0L1223.3 1176.6L1221.1 1186.6L1214.4 1196.6L1211.1 1204.4L1204.4 1204.4L1201.1 1208.8L1203.3 1213.3L1197.8 1217.7L1191.1 1220.0L1191.1 1226.6L1186.6 1232.2L1185.5 1239.9L1182.2 1245.5L1185.5 1251.1L1183.3 1257.7L1181.1 1264.4L1186.6 1271.1L1194.4 1276.6L1188.9 1278.8L1180.0 1275.5L1172.2 1268.8L1167.8 1259.9L1165.5 1246.6L1166.7 1235.5L1164.0 1220.0L1164.4 1202.2L1165.5 1184.4L1164.4 1168.8L1162.2 1154.4L1153.3 1150.0L1146.7 1144.4L1141.1 1133.3L1135.5 1124.4L1131.1 1117.7L1133.3 1107.8L1137.8 1101.1L1141.1 1091.1Z" fill="#dcdcdc"/>
<path d="M1656.6 1208.8L1658.8 1193.3L1658.2 1180.0L1661.1 1171.1L1671.1 1165.5L1679.9 1161.1L1688.8 1153.3L1695.5 1148.9L1706.6 1143.3L1715.5 1140.0L1722.2 1141.1L1719.9 1147.7L1726.6 1154.4L1733.3 1157.7L1737.7 1152.2L1741.0 1141.1L1743.9 1145.5L1746.6 1155.5L1752.1 1168.8L1757.7 1177.7L1761.0 1186.6L1759.5 1196.6L1754.4 1206.6L1746.6 1215.5L1739.9 1223.3L1731.0 1226.6L1723.3 1224.4L1717.7 1217.7L1715.5 1208.8L1711.0 1205.5L1707.7 1208.8L1705.5 1202.2L1697.7 1200.0L1686.6 1202.2L1675.5 1206.6L1664.4 1208.8Z" fill="#dcdcdc"/>
<path d="M1724.8 1237.7L1732.2 1236.6L1728.8 1242.2L1725.5 1244.4Z" fill="#dcdcdc"/>
<path d="M1773.3 1259.5L1777.7 1255.5L1786.6 1249.9L1795.5 1243.9L1798.8 1245.5L1791.0 1252.2L1782.1 1258.8L1776.6 1261.7Z" fill="#e0e0e0"/>
<path d="M1799.9 1242.2L1805.5 1235.5L1808.8 1229.9L1812.8 1232.2L1807.7 1237.7L1803.2 1243.3Z" fill="#e0e0e0"/>
<path d="M1738.6 1112.9L1746.6 1115.5L1753.3 1122.2L1757.7 1131.1L1759.9 1134.4L1754.4 1132.2L1746.6 1127.7L1738.6 1128.4Z" fill="#dcdcdc"/>
<path d="M1658.8 1100.0L1666.6 1095.5L1673.3 1088.9L1676.6 1086.6L1675.5 1092.2L1671.1 1093.3L1666.6 1099.5Z" fill="#e6e6e6"/>
<path d="M1680.4 1051.1L1684.4 1052.2L1683.3 1060.0L1681.1 1057.8Z" fill="#f0f0f0"/>
<path d="M1688.8 1077.8L1695.5 1080.0L1696.6 1085.5L1692.2 1084.4Z" fill="#f0f0f0"/>
<path d="M1425.9 967.1L1429.7 965.9L1437.1 967.1L1439.6 970.6L1448.4 969.6L1455.8 973.3L1462.1 977.1L1460.8 982.7L1449.6 983.9L1440.9 980.8L1433.4 983.3L1427.2 984.6L1423.4 980.8L1422.8 974.6L1424.7 969.6Z" fill="#ffffff"/>
<path d="M1470.8 969.6L1474.5 962.7L1483.2 961.5L1487.6 964.6L1485.7 969.6L1483.2 974.6L1487.0 979.6L1490.7 984.6L1492.0 990.8L1490.7 995.8L1485.7 997.0L1479.5 994.5L1475.8 987.0L1474.5 979.6L1472.0 974.6Z" fill="#ffffff"/>
<path d="M1044.6 851.0L1032.1 846.0L1022.2 841.7L1016.6 837.9L1007.2 839.8L999.7 841.7L993.5 846.0L987.9 847.9L989.8 853.5L991.0 859.7L982.3 860.4L976.1 862.2L976.7 867.2L984.8 867.8L990.4 868.5L986.0 873.4L978.6 876.6L972.3 879.7L968.6 884.0L969.2 889.6L973.6 892.7L974.8 895.2L982.3 897.1L987.3 896.5L984.8 900.2L978.6 904.6L969.8 910.2L963.6 912.1L972.3 908.3L979.8 904.1L989.8 898.4L997.2 893.1L1003.5 888.4L1004.7 890.9L999.7 895.2L1006.0 893.4L1009.7 890.9L1014.7 894.6L1022.2 896.5Z" fill="#2e66c8"/>
<path d="M1022.2 896.5L1025.9 899.6L1029.6 902.7L1032.7 901.5L1035.9 899.6L1037.1 905.8L1038.4 914.6L1041.5 917.7L1039.6 920.8L1037.1 916.4L1035.2 908.3L1032.1 905.2L1028.4 904.6Z" fill="#2e66c8"/>
<path d="M1045.8 852.3L1050.8 856.2L1057.0 854.8L1067.0 853.5L1075.1 852.3L1078.2 856.2L1086.9 857.0L1093.2 861.0L1099.4 863.2L1096.9 866.0L1103.1 867.8L1110.6 871.6L1114.4 867.2L1119.3 866.0L1125.6 869.7L1131.8 872.2L1138.0 870.9L1139.3 873.7L1144.3 869.7L1146.7 861.0L1145.5 856.0L1149.2 852.9L1152.4 854.8L1153.0 861.0L1150.5 867.2L1154.2 868.5L1158.0 876.6L1161.7 872.2L1164.2 867.2L1167.9 865.0L1172.9 867.2L1169.2 874.7L1164.2 879.7L1160.4 878.4L1156.7 883.4L1150.5 888.4L1143.0 892.1L1135.5 898.4L1130.5 905.8L1129.3 912.1L1132.4 913.3L1132.4 919.5L1139.3 922.0L1146.7 928.3L1153.0 929.5L1151.7 937.0L1154.2 943.2L1157.3 945.7L1161.1 940.7L1162.3 932.0L1167.9 927.0L1171.7 920.8L1169.2 914.6L1172.9 909.6L1174.2 900.8L1181.6 901.5L1187.9 905.8L1189.1 914.6L1192.8 919.5L1200.3 913.3L1204.1 922.0L1205.3 927.0L1211.5 933.2L1215.9 939.5L1214.0 945.7L1206.5 948.2L1197.7 948.8L1186.6 953.3L1177.7 960.0L1182.2 961.1L1181.1 966.6L1173.3 967.7L1164.4 971.1L1153.3 974.4L1142.2 978.8L1140.0 975.5L1144.4 967.7L1141.1 961.1L1132.2 955.5L1122.2 953.3L1116.6 950.0L1048.4 948.4L1043.3 944.4L1040.4 937.7L1039.5 928.9L1037.7 922.2L1036.0 915.5L1033.3 906.6L1030.0 902.2L1025.5 898.9L1023.3 896.0Z" fill="#5085ea"/>
<path d="M1085.7 842.9L1093.8 832.3L1099.4 832.1L1108.1 835.4L1106.3 837.9L1098.2 841.0L1093.2 845.4L1089.4 847.9Z" fill="#5085ea"/>
<path d="M1099.4 844.8L1105.6 841.7L1110.6 840.4L1109.4 843.5L1114.4 843.5L1119.3 846.0L1121.8 849.8L1124.3 844.8L1127.4 842.9L1128.1 849.8L1126.8 854.8L1131.8 859.7L1126.8 863.5L1119.3 862.2L1111.9 862.8L1103.1 861.0L1099.4 857.2L1106.9 856.0L1111.9 853.5L1104.4 852.3L1099.4 851.0L1104.4 848.5L1100.6 846.7Z" fill="#5085ea"/>
<path d="M1111.9 826.7L1118.1 823.0L1121.8 825.5L1124.3 829.2L1130.5 828.6L1129.9 823.6L1131.8 823.6L1131.8 828.0L1134.9 828.0L1131.8 831.1L1124.3 831.7L1118.1 832.6L1121.8 829.8L1116.8 828.6Z" fill="#5085ea"/>
<path d="M1103.8 821.1L1111.9 816.8L1117.5 816.1L1115.6 818.0L1109.4 820.5Z" fill="#5085ea"/>
<path d="M1127.4 814.9L1131.8 813.9L1130.5 815.5Z" fill="#5085ea"/>
<path d="M1146.1 809.9L1149.9 811.8L1153.0 815.5L1150.5 814.9L1146.7 811.8Z" fill="#5085ea"/>
<path d="M1158.2 814.3L1161.1 814.3L1161.7 816.8L1158.6 817.1Z" fill="#5085ea"/>
<path d="M1144.3 828.0L1149.2 826.1L1152.4 826.7L1150.5 829.8L1149.2 833.6L1146.1 832.3L1146.7 829.2Z" fill="#5085ea"/>
<path d="M1154.2 833.6L1157.3 832.9L1158.0 835.4L1155.5 835.8Z" fill="#5085ea"/>
<path d="M1157.3 824.2L1162.9 825.5L1166.7 828.0L1166.1 832.3L1170.4 834.8L1177.9 834.8L1186.0 835.4L1186.6 837.9L1181.6 839.2L1174.2 838.6L1167.9 837.3L1163.6 834.8L1162.9 829.8L1160.4 826.7Z" fill="#5085ea"/>
<path d="M1166.1 804.3L1170.4 801.8L1176.0 801.2L1177.3 804.3L1182.3 806.8L1181.0 811.1L1183.5 813.0L1178.5 816.1L1172.9 817.4L1169.2 815.5L1168.5 811.8L1171.7 809.9L1167.3 808.0Z" fill="#5085ea"/>
<path d="M1136.8 846.0L1141.1 842.3L1146.7 841.7L1146.1 846.0L1145.5 851.0L1142.4 852.3L1140.5 848.5Z" fill="#5085ea"/>
<path d="M1150.5 846.0L1154.2 841.7L1161.1 841.0L1156.7 844.8L1153.0 847.9L1151.1 849.8Z" fill="#5085ea"/>
<path d="M1138.6 861.6L1141.8 862.8L1140.5 866.0L1137.4 864.1Z" fill="#5085ea"/>
<path d="M1161.7 849.8L1166.1 846.0L1169.8 845.4L1170.4 851.0L1175.4 847.9L1180.4 846.0L1181.0 851.6L1187.9 852.3L1192.2 854.8L1192.8 858.5L1197.8 859.1L1202.8 862.2L1204.7 867.2L1200.3 870.3L1206.5 874.7L1211.5 878.4L1213.4 882.2L1209.0 887.8L1205.3 883.4L1200.3 883.4L1199.1 887.1L1202.8 890.9L1204.1 895.9L1202.8 897.7L1197.8 900.8L1194.1 897.1L1189.7 895.2L1186.6 890.9L1184.1 888.4L1176.6 889.6L1178.5 887.8L1184.1 885.9L1189.1 880.9L1192.2 875.9L1190.3 870.9L1185.4 866.0L1181.6 862.2L1176.6 863.5L1169.2 861.0L1161.7 857.9L1164.2 854.8L1161.1 853.5Z" fill="#5085ea"/>
<path d="M1157.3 890.9L1159.8 885.3L1164.8 888.4L1166.1 891.5L1161.7 890.3L1159.2 892.7Z" fill="#5085ea"/>
<path d="M1181.1 796.7L1195.5 793.8L1211.0 792.9L1225.5 794.4L1235.5 797.8L1224.4 804.4L1215.5 811.1L1204.4 813.3L1199.9 820.0L1191.1 827.8L1186.6 830.0L1181.1 824.4L1185.5 821.1L1179.9 816.7L1186.6 811.1L1184.4 804.4L1188.8 802.2Z" fill="#5085ea"/>
<path d="M1207.7 955.5L1213.3 948.8L1219.9 956.6L1218.8 960.0L1212.2 958.8Z" fill="#5085ea"/>
<path d="M1182.2 961.1L1185.5 955.5L1191.1 955.1L1192.2 960.0L1198.8 962.2L1199.9 965.5L1193.3 967.7L1186.6 971.1L1188.8 965.5L1183.3 965.5Z" fill="#5085ea"/>
<path d="M1048.4 948.8L1116.6 950.6L1122.2 953.7L1132.2 956.0L1141.1 961.7L1144.4 967.7L1140.4 976.6L1142.6 979.5L1153.3 975.1L1164.4 971.5L1172.8 968.4L1176.6 961.1L1181.7 962.2L1181.7 967.7L1175.5 971.1L1172.2 976.6L1165.5 980.0L1161.1 984.4L1157.7 990.0L1153.3 992.2L1153.7 998.8L1146.6 1004.4L1141.1 1008.8L1136.8 1013.3L1138.0 1021.1L1138.4 1029.3L1135.5 1030.2L1132.6 1023.3L1131.1 1015.9L1126.6 1015.5L1118.8 1015.5L1112.2 1017.7L1104.4 1016.6L1096.6 1021.1L1091.5 1026.6L1087.7 1017.7L1082.2 1015.5L1077.7 1016.6L1073.3 1009.9L1063.3 1008.8L1055.5 1006.6L1046.6 1004.4L1040.0 997.7L1036.0 988.8L1034.4 978.8L1036.6 968.8L1041.1 960.0L1045.5 953.3Z" fill="#2e66c8" stroke="#ffffff" stroke-width="1.6"/>
<path d="M931.8 1042.6L933.3 1042.6L933.3 1044.8L931.8 1044.8Z" fill="#2e66c8"/>
<path d="M1339.9 924.4L1342.6 921.1L1344.4 925.5L1346.6 925.5L1344.4 931.1L1348.8 935.5L1351.0 940.0L1354.4 943.3L1355.5 946.6L1351.0 948.8L1343.2 950.6L1342.1 947.7L1346.6 945.5L1343.2 941.1L1344.4 937.7L1342.1 933.3L1341.0 928.9Z" fill="#5085ea"/>
<path d="M1335.5 935.1L1338.1 935.1L1337.7 937.7L1335.5 937.3Z" fill="#5085ea"/>
<path d="M1343.2 958.8L1351.0 955.5L1356.6 951.1L1362.1 953.3L1371.0 957.7L1368.8 963.3L1367.7 968.8L1369.9 974.4L1364.3 976.6L1357.7 978.8L1351.0 976.6L1351.0 968.8L1349.9 963.3Z" fill="#5085ea" stroke="#ffffff" stroke-width="1.6"/>
<path d="M1411.1 948.8L1416.7 946.6L1428.9 948.4L1433.3 945.5L1440.0 950.0L1446.6 952.2L1451.1 955.5L1448.9 960.0L1443.3 963.3L1444.4 966.6L1440.4 970.0L1437.8 965.5L1433.3 963.3L1427.8 964.4L1425.5 960.0L1417.8 958.8L1412.2 956.6Z" fill="#5085ea" stroke="#ffffff" stroke-width="1.6"/>
<path d="M1422.6 984.4L1428.9 982.2L1437.8 981.1L1444.4 983.3L1455.5 983.3L1464.4 983.3L1467.1 988.8L1466.2 994.4L1457.8 995.1L1450.0 996.6L1442.2 996.0L1437.8 998.2L1430.0 996.6L1424.4 993.3L1422.6 988.8Z" fill="#5085ea" stroke="#ffffff" stroke-width="1.6"/>
<path d="M1421.3 978.8L1425.5 980.0L1423.3 982.2Z" fill="#5085ea"/>
<path d="M1544.4 986.6L1553.3 982.2L1558.8 976.6L1557.3 968.8L1562.2 964.4L1562.2 958.8L1571.1 953.7L1576.6 958.8L1581.1 963.3L1591.1 967.7L1598.8 973.7L1611.1 974.4L1621.1 976.6L1633.3 972.2L1638.8 965.5L1648.8 958.8L1654.4 955.5L1651.0 951.1L1642.2 950.0L1647.7 944.4L1648.8 934.4L1655.5 930.6L1663.3 935.5L1669.9 943.3L1679.9 950.0L1687.7 948.4L1686.6 957.7L1683.3 965.5L1676.6 971.1L1672.2 978.8L1665.5 976.6L1659.9 981.1L1656.6 985.5L1662.2 991.5L1668.8 990.0L1666.6 996.0L1673.3 1006.6L1675.5 1015.5L1672.2 1026.6L1666.6 1034.4L1655.5 1039.9L1646.6 1040.4L1639.9 1037.3L1633.3 1037.7L1627.7 1039.5L1622.2 1037.7L1618.8 1032.2L1616.6 1023.3L1611.1 1019.9L1607.7 1017.3L1601.1 1019.9L1593.3 1022.2L1582.2 1019.9L1573.3 1015.5L1564.4 1011.1L1560.0 1004.4L1556.6 1000.0L1551.1 993.3Z" fill="#5085ea" stroke="#ffffff" stroke-width="1.6"/>
<path d="M1649.3 1046.6L1651.5 1046.2L1650.6 1049.3L1648.4 1048.8Z" fill="#5085ea"/>
<path d="M1548.8 1004.4L1554.4 1002.6L1558.8 1003.3L1560.0 1007.7L1562.2 1013.3L1571.1 1018.8L1582.2 1024.4L1589.9 1026.6L1593.3 1025.5L1595.5 1027.7L1601.1 1023.3L1605.5 1019.9L1609.9 1023.3L1606.6 1026.6L1604.4 1035.5L1601.1 1029.9L1595.5 1029.9L1591.1 1033.3L1589.9 1037.7L1585.5 1046.6L1575.5 1057.7L1571.1 1066.6L1568.8 1075.5L1565.5 1080.4L1560.0 1071.0L1554.4 1057.7L1550.0 1044.8L1542.2 1043.9L1538.2 1036.8L1543.3 1032.4L1540.4 1025.7L1545.5 1022.2L1551.1 1015.5L1550.0 1008.8Z" fill="#234d9e" stroke="#ffffff" stroke-width="1.6"/>
<path d="M1711.5 960.0L1715.5 961.1L1721.0 962.6L1717.7 965.5L1715.5 970.0L1712.1 967.7L1710.6 964.4Z" fill="#5085ea"/>
<path d="M1713.3 974.4L1716.6 978.8L1717.7 986.6L1718.8 993.3L1713.3 995.5L1708.8 997.7L1703.3 1000.0L1697.7 1001.1L1695.5 1003.3L1698.1 996.6L1704.4 993.3L1709.9 990.0L1713.3 982.2Z" fill="#5085ea"/>
<path d="M1695.0 1002.2L1698.1 1003.3L1697.7 1007.7L1695.5 1006.6Z" fill="#5085ea"/>
<path d="M1677.3 1030.2L1679.3 1029.7L1678.8 1036.8L1676.8 1036.2Z" fill="#1f4596"/>
<path d="M1629.9 1038.8L1636.6 1037.3L1640.4 1040.4L1637.7 1047.1L1645.7 1055.9L1649.3 1064.8L1646.6 1072.4L1641.3 1077.3L1639.9 1075.0L1644.8 1069.9L1646.2 1063.3L1642.2 1056.6L1635.0 1048.8L1632.8 1043.3Z" fill="#5085ea"/>
<path d="M1616.0 1090.4L1622.2 1092.2L1628.8 1100.0L1635.5 1107.8L1641.1 1113.3L1642.2 1120.0L1637.7 1118.9L1631.1 1111.1L1624.4 1102.2L1618.8 1095.5Z" fill="#2e66c8"/>
<path d="M1643.9 1123.3L1651.1 1124.4L1659.9 1125.5L1666.6 1128.4L1659.9 1128.4L1651.1 1126.6L1644.4 1124.9Z" fill="#2e66c8"/>
<path d="M1653.3 1102.2L1658.8 1103.3L1666.6 1100.0L1672.2 1093.3L1675.1 1094.4L1675.9 1101.1L1674.4 1106.6L1671.1 1114.4L1664.4 1113.3L1657.7 1111.1L1654.4 1106.6Z" fill="#2e66c8"/>
<path d="M1681.1 1107.8L1684.4 1108.9L1687.7 1112.2L1688.8 1117.7L1685.5 1116.6L1683.3 1113.3L1680.4 1112.2Z" fill="#2e66c8"/>
<path d="M1714.4 1107.8L1718.8 1107.1L1719.9 1110.0L1715.5 1110.0Z" fill="#2e66c8"/>
<path d="M1718.8 1113.3L1725.5 1114.4L1728.8 1111.5L1738.2 1112.9L1737.7 1128.9L1732.2 1127.7L1726.6 1118.9L1722.2 1116.0Z" fill="#2e66c8"/>
<path d="M1045.2 851.3L1022.8 896.5L1025.9 899.4L1029.6 902.7L1035.9 899.9L1037.7 909.6L1041.5 917.7L1039.6 921.4" fill="none" stroke="#fff" stroke-width="2.2"/>
<path d="M1048.4 948.6L1116.6 950.4L1122.2 953.5L1132.2 955.7L1141.1 961.5L1144.4 967.7L1140.2 976.6L1142.4 979.3L1153.3 974.8L1164.4 971.3L1172.8 968.2L1176.6 961.1" fill="none" stroke="#fff" stroke-width="2.2"/>
<path d="M1346.6 1001.1L1348.8 1013.3L1338.8 1021.1L1331.1 1026.7L1331.1 1044.4L1310.0 1045.5" fill="none" stroke="#fff" stroke-width="1.7"/>
<path d="M1372.2 998.9L1374.4 1011.1L1377.7 1016.7L1378.8 1033.3L1384.4 1038.9" fill="none" stroke="#fff" stroke-width="1.7"/>
<path d="M1331.1 1026.7L1364.4 1051.1L1384.4 1038.9L1393.3 1040.0L1417.7 1048.9L1421.0 1043.3" fill="none" stroke="#fff" stroke-width="1.7"/>
<path d="M1336.6 1034.4L1338.8 1061.1L1322.2 1062.2" fill="none" stroke="#fff" stroke-width="1.7"/>
<path d="M1364.4 1051.1L1362.2 1061.1L1355.5 1064.4L1338.8 1061.1" fill="none" stroke="#fff" stroke-width="1.7"/>
<path d="M1419.9 1015.5L1421.0 1043.3L1453.3 1043.3" fill="none" stroke="#fff" stroke-width="1.7"/>
<path d="M1417.7 1048.9L1416.6 1068.9L1393.3 1073.3L1391.1 1066.6L1393.3 1055.5L1393.3 1040.0" fill="none" stroke="#fff" stroke-width="1.7"/>
<path d="M1362.2 1066.6L1375.5 1068.9L1391.1 1066.6L1395.5 1077.8L1386.6 1086.6L1378.8 1093.3" fill="none" stroke="#fff" stroke-width="1.7"/>
<path d="M1362.2 1066.6L1361.1 1084.4L1369.9 1091.1" fill="none" stroke="#fff" stroke-width="1.7"/>
<path d="M1416.6 1068.9L1422.2 1077.8L1437.7 1080.0L1444.4 1073.3L1446.6 1084.4L1453.3 1068.9L1464.4 1068.9" fill="none" stroke="#fff" stroke-width="1.7"/>
<path d="M1446.6 1084.4L1455.5 1093.3L1465.5 1095.5L1477.7 1084.4L1469.9 1074.4" fill="none" stroke="#fff" stroke-width="1.7"/>
<path d="M1465.5 1095.5L1464.4 1110.0" fill="none" stroke="#fff" stroke-width="1.7"/>
<path d="M1395.5 1091.1L1406.6 1093.3L1435.5 1091.1L1437.7 1104.4L1433.3 1113.3L1435.5 1126.6L1428.8 1135.5L1415.5 1135.5L1413.3 1126.6L1399.9 1124.4L1388.8 1122.2" fill="none" stroke="#fff" stroke-width="1.7"/>
<path d="M1437.7 1104.4L1459.9 1113.3" fill="none" stroke="#fff" stroke-width="1.7"/>
<path d="M1435.5 1126.6L1446.6 1135.5L1461.0 1135.5" fill="none" stroke="#fff" stroke-width="1.7"/>
<path d="M1385.5 1152.2L1411.0 1153.3L1426.6 1151.1L1437.7 1144.4L1446.6 1144.4L1445.5 1155.5L1438.8 1164.4L1437.7 1168.8" fill="none" stroke="#fff" stroke-width="1.7"/>
<path d="M1411.0 1153.3L1407.7 1180.0L1419.9 1173.3L1433.3 1167.7L1437.7 1168.8L1436.6 1177.7" fill="none" stroke="#fff" stroke-width="1.7"/>
<path d="M1407.7 1180.0L1406.6 1185.5L1397.7 1185.5" fill="none" stroke="#fff" stroke-width="1.7"/>
<path d="M1322.2 1062.2L1324.4 1073.3L1333.3 1077.8L1332.2 1091.1" fill="none" stroke="#fff" stroke-width="1.7"/>
<path d="M1333.3 1077.8L1344.4 1075.5L1344.4 1090.6" fill="none" stroke="#fff" stroke-width="1.7"/>
<path d="M1344.4 1075.5L1355.5 1073.3L1355.5 1088.9" fill="none" stroke="#fff" stroke-width="1.7"/>
<path d="M1355.5 1064.4L1362.2 1066.6" fill="none" stroke="#fff" stroke-width="1.7"/>
<path d="M1310.0 1053.3L1322.2 1053.3L1322.2 1062.2" fill="none" stroke="#fff" stroke-width="1.7"/>
<path d="M1307.7 1065.5L1320.0 1068.9L1324.4 1073.3" fill="none" stroke="#fff" stroke-width="1.7"/>
<path d="M1393.3 1073.3L1397.7 1084.4L1395.5 1091.1" fill="none" stroke="#fff" stroke-width="1.7"/>
<path d="M1422.2 1077.8L1419.9 1086.6L1406.6 1093.3" fill="none" stroke="#fff" stroke-width="1.7"/>
<path d="M1435.5 1091.1L1446.6 1091.1L1455.5 1093.3" fill="none" stroke="#fff" stroke-width="1.7"/>
<path d="M1388.8 1122.2L1391.1 1113.3L1397.7 1104.4L1395.5 1091.1" fill="none" stroke="#fff" stroke-width="1.7"/>
<path d="M1378.8 1097.8L1388.8 1100.0L1395.5 1095.5" fill="none" stroke="#fff" stroke-width="1.7"/>
<path d="M1160.0 1074.4L1166.7 1084.4L1164.4 1097.8L1173.3 1101.1L1188.9 1095.5L1197.8 1090.0" fill="none" stroke="#fff" stroke-width="1.7"/>
<path d="M1166.7 1084.4L1160.0 1100.0L1162.2 1111.1L1153.3 1113.3L1151.1 1124.4L1153.3 1131.1L1164.4 1135.5" fill="none" stroke="#fff" stroke-width="1.7"/>
<path d="M1133.3 1107.8L1146.7 1106.6L1153.3 1113.3" fill="none" stroke="#fff" stroke-width="1.7"/>
<path d="M1146.7 1106.6L1137.8 1115.5" fill="none" stroke="#fff" stroke-width="1.7"/>
<path d="M1164.4 1135.5L1173.3 1133.3L1188.9 1144.4L1195.5 1153.3L1195.5 1160.0L1184.4 1162.2L1186.6 1168.8L1197.8 1173.3L1206.6 1180.0L1208.9 1186.6L1197.8 1182.2L1195.5 1175.5L1182.2 1168.8L1173.3 1168.8L1168.9 1175.5" fill="none" stroke="#fff" stroke-width="1.7"/>
<path d="M1164.4 1135.5L1165.5 1155.5L1171.1 1168.8" fill="none" stroke="#fff" stroke-width="1.7"/>
<path d="M1168.9 1175.5L1170.0 1202.2L1171.1 1224.4L1173.3 1246.6L1177.8 1264.4L1182.6 1271.5" fill="none" stroke="#fff" stroke-width="1.7"/>
<path d="M1201.1 1192.2L1211.1 1196.6" fill="none" stroke="#fff" stroke-width="1.7"/>
<path d="M1201.1 1192.2L1201.1 1204.4" fill="none" stroke="#fff" stroke-width="1.7"/>
<path d="M1188.9 1084.4L1191.1 1100.0L1197.8 1101.1" fill="none" stroke="#fff" stroke-width="1.7"/>
<path d="M1197.8 1090.0L1200.0 1097.8L1205.5 1100.0L1208.9 1092.2" fill="none" stroke="#fff" stroke-width="1.7"/>
<path d="M1471.1 953.3L1477.7 946.6L1500.0 944.4L1504.4 935.5L1517.7 931.1L1524.4 933.3L1540.0 931.1L1548.8 944.4L1562.2 948.8L1571.1 953.7" fill="none" stroke="#fff" stroke-width="1.7"/>
<path d="M1471.1 953.3L1470.0 960.0L1475.5 961.1" fill="none" stroke="#fff" stroke-width="1.7"/>
<path d="M1486.6 967.7L1495.5 966.6L1504.4 973.3L1517.7 980.0L1531.1 982.2L1544.4 982.2L1553.3 982.2" fill="none" stroke="#fff" stroke-width="1.7"/>
<path d="M1571.1 953.7L1582.2 944.4L1595.5 938.9L1606.6 944.4L1624.4 947.7L1637.7 943.3L1648.8 944.4" fill="none" stroke="#fff" stroke-width="1.7"/>
<path d="M1468.9 980.0L1473.3 993.3L1471.1 1004.4L1479.7 1015.9" fill="none" stroke="#fff" stroke-width="1.7"/>
<path d="M1493.3 991.1L1504.4 993.3L1515.5 991.1L1517.7 1004.4L1515.5 1017.7L1519.5 1031.5" fill="none" stroke="#fff" stroke-width="1.7"/>
<path d="M1515.5 991.1L1531.1 986.6L1544.4 986.6" fill="none" stroke="#fff" stroke-width="1.7"/>
<path d="M1517.7 1004.4L1531.1 1006.6L1540.0 1000.0L1548.8 1004.4" fill="none" stroke="#fff" stroke-width="1.7"/>
<path d="M1519.5 1031.5L1528.8 1019.9L1535.5 1017.7L1540.4 1025.7" fill="none" stroke="#fff" stroke-width="1.7"/>
<path d="M1493.3 991.1L1495.5 977.7L1504.4 973.3" fill="none" stroke="#fff" stroke-width="1.7"/>
<path d="M1504.4 993.3L1517.7 982.2" fill="none" stroke="#fff" stroke-width="1.7"/>
<path d="M1450.0 996.0L1464.4 995.5L1473.3 1004.4L1479.7 1015.9" fill="none" stroke="#fff" stroke-width="1.7"/>
<path d="M1446.2 1007.1L1457.8 1004.4L1464.4 995.5" fill="none" stroke="#fff" stroke-width="1.7"/>
<path d="M1457.8 1004.4L1473.3 1017.7L1479.7 1019.3" fill="none" stroke="#fff" stroke-width="1.7"/>
<path d="M1491.1 1062.6L1495.5 1048.8L1508.9 1047.1" fill="none" stroke="#fff" stroke-width="1.7"/>
<path d="M1472.6 1069.3L1482.2 1057.7L1495.5 1048.8" fill="none" stroke="#fff" stroke-width="1.7"/>
<path d="M1495.5 1048.8L1500.0 1037.7" fill="none" stroke="#fff" stroke-width="1.7"/>
<path d="M1609.9 1023.3L1615.5 1035.5L1618.8 1048.8" fill="none" stroke="#fff" stroke-width="1.7"/>
<path d="M1618.8 1032.2L1622.2 1044.4L1628.8 1048.8L1637.7 1046.6" fill="none" stroke="#fff" stroke-width="1.7"/>
<path d="M1619.3 1067.0L1620.4 1055.5L1628.8 1057.7L1635.5 1068.8" fill="none" stroke="#fff" stroke-width="1.7"/>
<path d="M1680.4 973.7L1683.3 976.6" fill="none" stroke="#fff" stroke-width="1.7"/>
<path d="M1388.6 937.2L1389.8 949.7L1386.1 953.4" fill="none" stroke="#fff" stroke-width="2.3"/>
<path d="M1409.7 936.0L1411.0 949.7L1407.2 953.4L1389.8 949.7" fill="none" stroke="#fff" stroke-width="2.3"/>
<path d="M1371.1 957.8L1373.0 949.7L1369.9 942.2" fill="none" stroke="#fff" stroke-width="2.3"/>
<path d="M1373.0 949.7L1386.1 953.4L1383.6 959.6L1373.6 962.1L1369.9 962.1" fill="none" stroke="#fff" stroke-width="2.3"/>
<path d="M1411.0 949.7L1417.2 947.2L1429.7 945.9" fill="none" stroke="#fff" stroke-width="2.3"/>
<path d="M1419.7 914.8L1419.7 927.2L1427.2 934.7L1433.4 944.7" fill="none" stroke="#fff" stroke-width="2.3"/>
<path d="M1409.7 929.7L1419.7 927.2" fill="none" stroke="#fff" stroke-width="2.3"/>
<path d="M1411.0 924.8L1417.2 923.5L1419.7 919.8" fill="none" stroke="#fff" stroke-width="2.3"/>
<path d="M1422.2 912.3L1425.9 899.8L1419.7 887.4L1417.2 874.3" fill="none" stroke="#fff" stroke-width="2.3"/>
<path d="M1378.0 916.0L1381.1 902.3L1386.1 891.1L1394.8 879.9L1404.8 874.9L1409.7 871.2L1417.2 874.3" fill="none" stroke="#fff" stroke-width="2.3"/>
<path d="M1407.2 887.4L1404.8 874.9" fill="none" stroke="#fff" stroke-width="2.3"/>
<path d="M1411.0 958.4L1414.7 962.1L1424.7 964.6L1425.9 967.1" fill="none" stroke="#fff" stroke-width="2.3"/>
<path d="M1407.2 953.4L1399.8 955.9L1394.8 962.1L1399.8 967.1L1409.7 969.6L1419.7 969.6L1424.7 969.6" fill="none" stroke="#fff" stroke-width="2.3"/>
<path d="M1399.8 967.1L1404.8 974.6L1414.7 979.6L1421.9 982.1" fill="none" stroke="#fff" stroke-width="2.3"/>
<path d="M1383.6 959.6L1388.6 965.9" fill="none" stroke="#fff" stroke-width="2.3"/>
<path d="M1394.8 962.1L1388.6 965.9" fill="none" stroke="#fff" stroke-width="2.3"/>
<path d="M1326.3 979.6L1327.5 987.0L1326.3 994.5" fill="none" stroke="#fff" stroke-width="2.3"/>
<path d="M1350.6 976.5L1358.0 978.9" fill="none" stroke="#fff" stroke-width="2.3"/>
<path d="M1404.8 974.6L1399.8 974.6" fill="none" stroke="#fff" stroke-width="2.3"/>
<path d="M1409.7 969.6L1411.0 985.2" fill="none" stroke="#fff" stroke-width="2.3"/>
<path d="M1046.6 1004.8L1055.5 1006.8L1063.3 1009.1L1073.3 1010.4L1077.7 1017.1L1082.2 1015.7L1087.7 1017.9L1091.5 1026.8" fill="none" stroke="#fff" stroke-width="1.6"/>
<path d="M1110.0 1056.6L1104.4 1062.6" fill="none" stroke="#fff" stroke-width="1.6"/>
<path d="M1118.8 1058.8L1113.3 1069.3" fill="none" stroke="#fff" stroke-width="1.6"/>
</g></svg>

<!-- table -->
<div class="t" style="left:1844px;top:764px;font-size:24px;color:#5f6368;letter-spacing:2.700px"><span class="dash" style="padding-bottom:6px;margin-right:-2.700px">國家/地區</span></div>
<div class="t" style="right:289px;top:764px;font-size:24px;color:#5f6368;letter-spacing:2.400px"><span class="dash" style="padding-bottom:6px;margin-right:-2.400px">使用者</span></div>
<div class="hr" style="left:1844px;top:808px;width:652px"></div>
<div class="row" style="top:810px"><div class="n">Taiwan</div><div class="v">40</div><div class="ln"></div><div class="b" style="width:396px"></div></div>
<div class="row" style="top:874px"><div class="n">India</div><div class="v">11</div><div class="ln"></div><div class="b" style="width:110px"></div></div>
<div class="row" style="top:938px"><div class="n">United States</div><div class="v">4</div><div class="ln"></div><div class="b" style="width:41px"></div></div>
<div class="row" style="top:1002px"><div class="n">Indonesia</div><div class="v">2</div><div class="ln"></div><div class="b" style="width:21px"></div></div>
<div class="row" style="top:1066px"><div class="n">Canada</div><div class="v">1</div><div class="ln"></div><div class="b" style="width:11px"></div></div>
<div class="row" style="top:1130px"><div class="n">China</div><div class="v">1</div><div class="ln"></div><div class="b" style="width:11px"></div></div>
<div class="row" style="top:1194px"><div class="n">France</div><div class="v">1</div><div class="b" style="width:11px"></div></div>
<div class="t m" style="left:2281px;top:1356px;font-size:28px;color:#2a6bd9;letter-spacing:.4px" id="viewlink">查看國家/地區</div>
<svg class="abs" style="left:2480px;top:1356px" width="28" height="28" viewBox="0 0 28 28"><path d="M2 14H25M14.500 3.500L25 14L14.500 24.500" fill="none" stroke="#2a6bd9" stroke-width="3"/></svg>

<!-- scrollbar -->
<div class="abs" style="left:2660px;top:853px;width:11px;height:230px;border-radius:6px;background:#dadce0"></div>

<!-- bottom -->
<div class="t" style="left:816px;top:1490px;font-size:24px;color:#3c4043;letter-spacing:1.5px" id="q1">活躍使用者的趨勢為何？</div>
<div class="t" style="left:1936px;top:1490px;font-size:24px;color:#3c4043;letter-spacing:1.600px" id="q2">哪些頁面和畫面取得了最多的觀看次數？</div>
<div class="card" style="left:814px;top:1530px;width:1092px;height:200px"></div>
<div class="card" style="left:1934px;top:1530px;width:612px;height:200px"></div>
<div class="t" style="left:864px;top:1586px;font-size:28px;color:#3c4043;letter-spacing:.3px"><span class="dash" style="padding-bottom:3px">使用者活動時序</span></div>
<div class="pill" style="left:1737px;top:1580px"></div>
<svg class="abs" style="left:1753px;top:1591px" width="35" height="35" viewBox="0 0 35 35"><circle cx="17.500" cy="17.500" r="15.200" fill="none" stroke="#2c7a36" stroke-width="3.200"/><path d="M9.500 18L15 23.500L25.500 12.500" fill="none" stroke="#2c7a36" stroke-width="3.400"/></svg>
<svg class="abs" style="left:1814px;top:1604px" width="17" height="10" viewBox="0 0 17 10"><path d="M0 0H17L8.500 9.500Z" fill="#5f6368"/></svg>
<div class="t" style="left:1984px;top:1586px;font-size:28px;color:#3c4043;letter-spacing:.3px"><span class="dash" style="padding-bottom:3px">瀏覽</span> 劃分依據：</div>
<div class="pill" style="left:2377px;top:1580px"></div>
<svg class="abs" style="left:2393px;top:1591px" width="35" height="35" viewBox="0 0 35 35"><circle cx="17.500" cy="17.500" r="15.200" fill="none" stroke="#2c7a36" stroke-width="3.200"/><path d="M9.500 18L15 23.500L25.500 12.500" fill="none" stroke="#2c7a36" stroke-width="3.400"/></svg>
<svg class="abs" style="left:2454px;top:1604px" width="17" height="10" viewBox="0 0 17 10"><path d="M0 0H17L8.500 9.500Z" fill="#5f6368"/></svg>


</div><div style="position:absolute;left:0;top:0;right:0;bottom:0;border-radius:22px;box-shadow:inset 0 1.5px 0 rgba(255,255,255,.24)"></div></div>
</body>
</html>
